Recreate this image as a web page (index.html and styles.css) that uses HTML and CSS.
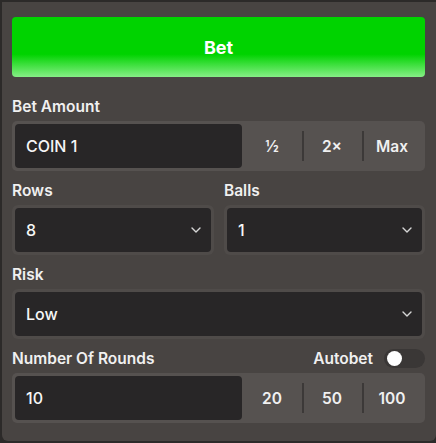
FILE: index.html
```html
<!DOCTYPE html>
<html>
<head>
<meta charset="utf-8">
<link rel="stylesheet" href="styles.css">
</head>
<body>
<div class="panel">
  <button class="bet-btn">Bet</button>

  <div class="section first">
    <div class="label">Bet Amount</div>
    <div class="group">
      <div class="input">COIN 1</div>
      <div class="opt">½</div>
      <div class="opt sep">2×</div>
      <div class="opt sep">Max</div>
    </div>
  </div>

  <div class="section two">
    <div class="col">
      <div class="label">Rows</div>
      <div class="select">
        <div class="select-inner"><span>8</span>
          <svg class="chev" width="10" height="6" viewBox="0 0 10 6"><path d="M1 1l4 4 4-4" fill="none" stroke="#d6d6d6" stroke-width="1.4" stroke-linecap="round" stroke-linejoin="round"/></svg>
        </div>
      </div>
    </div>
    <div class="col">
      <div class="label">Balls</div>
      <div class="select">
        <div class="select-inner"><span>1</span>
          <svg class="chev" width="10" height="6" viewBox="0 0 10 6"><path d="M1 1l4 4 4-4" fill="none" stroke="#d6d6d6" stroke-width="1.4" stroke-linecap="round" stroke-linejoin="round"/></svg>
        </div>
      </div>
    </div>
  </div>

  <div class="section">
    <div class="label">Risk</div>
    <div class="select">
      <div class="select-inner"><span>Low</span>
        <svg class="chev" width="10" height="6" viewBox="0 0 10 6"><path d="M1 1l4 4 4-4" fill="none" stroke="#d6d6d6" stroke-width="1.4" stroke-linecap="round" stroke-linejoin="round"/></svg>
      </div>
    </div>
  </div>

  <div class="section">
    <div class="label-row">
      <div class="label">Number Of Rounds</div>
      <div class="auto">
        <span class="label">Autobet</span>
        <span class="toggle"><span class="knob"></span></span>
      </div>
    </div>
    <div class="group">
      <div class="input">10</div>
      <div class="opt">20</div>
      <div class="opt sep">50</div>
      <div class="opt sep">100</div>
    </div>
  </div>
</div>
</body>
</html>
```

FILE: styles.css
```css
html, body {
  margin: 0;
  padding: 0;
  background: #2c2a29;
}
body {
  padding: 2px 0 0 2px;
  font-family: Inter, "Noto Sans", sans-serif;
  color: #f2f2f2;
}
.panel {
  width: 434px;
  height: 439px;
  box-sizing: border-box;
  background: #484442;
  border-radius: 0 0 6px 6px;
  padding: 15px 11px 0 10px;
}
.bet-btn {
  display: block;
  width: 413px;
  height: 60px;
  border: none;
  border-radius: 4px;
  background: linear-gradient(to bottom, #00d300 0%, #00d300 62%, #86ee86 100%);
  color: #ffffff;
  font-family: Inter, "Noto Sans", sans-serif;
  font-weight: 700;
  font-size: 18px;
  padding: 0;
}
.section {
  margin-top: 10px;
}
.section.first {
  margin-top: 20px;
}
.label {
  font-size: 15.5px;
  font-weight: 600;
  line-height: 19px;
  color: #f0f0f0;
  margin-bottom: 5px;
}
.group {
  display: flex;
  height: 50px;
  box-sizing: border-box;
  padding: 3px;
  background: #565250;
  border-radius: 5px;
}
.input {
  width: 227px;
  background: #282627;
  border-radius: 4px;
  display: flex;
  align-items: center;
  padding-left: 11px;
  box-sizing: border-box;
  font-size: 16px;
  font-weight: 500;
  color: #f6f6f6;
}
.opt {
  width: 60px;
  display: flex;
  align-items: center;
  justify-content: center;
  font-size: 15.5px;
  font-weight: 600;
  color: #f0f0f0;
  position: relative;
}
.opt.sep::before {
  content: "";
  position: absolute;
  left: 0;
  top: 7px;
  bottom: 7px;
  width: 2px;
  background: #3c3938;
}
.section.two {
  display: grid;
  grid-template-columns: 202px 201px;
  column-gap: 10px;
}
.select {
  height: 50px;
  box-sizing: border-box;
  padding: 3px;
  background: #4f4b49;
  border-radius: 6px;
}
.select-inner {
  height: 100%;
  background: #282627;
  border-radius: 4px;
  display: flex;
  align-items: center;
  justify-content: space-between;
  padding: 0 10px 0 11px;
  box-sizing: border-box;
  font-size: 16px;
  font-weight: 500;
  color: #f6f6f6;
}
.chev {
  display: block;
}
.label-row {
  display: flex;
  justify-content: space-between;
  align-items: center;
  height: 19px;
  margin-bottom: 5px;
}
.label-row .label {
  margin-bottom: 0;
}
.auto {
  display: flex;
  align-items: center;
  gap: 11px;
}
.toggle {
  width: 41px;
  height: 19px;
  border-radius: 10px;
  background: #3a3736;
  position: relative;
  display: block;
}
.knob {
  position: absolute;
  left: 3px;
  top: 2px;
  width: 15px;
  height: 15px;
  border-radius: 50%;
  background: #ffffff;
}
```
